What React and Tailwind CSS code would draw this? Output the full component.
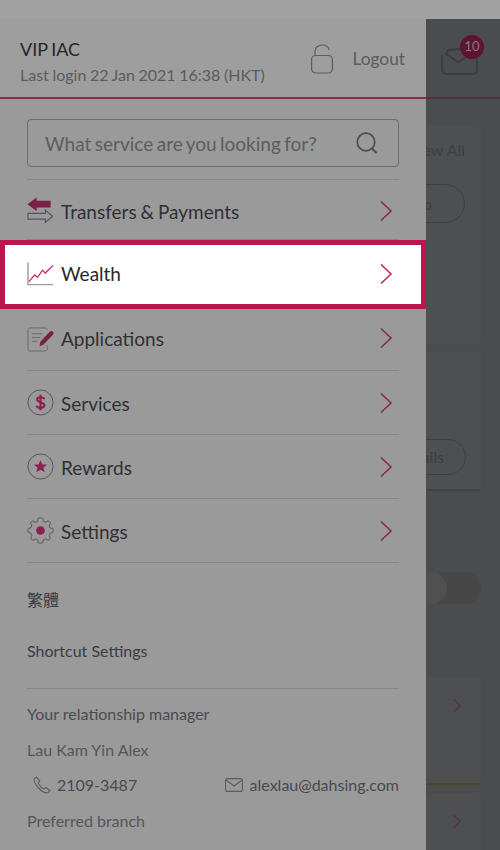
import React from "react";

const lato = { fontFamily: '"Lato", "Noto Sans CJK TC", sans-serif' };

const Chevron = ({ className }) => (
  <svg width="14" height="22" viewBox="0 0 14 22" fill="none" className={className}>
    <path d="M2 1.5L12 11L2 20.5" stroke="currentColor" strokeWidth="1.6" />
  </svg>
);

const TransferIcon = () => (
  <svg width="27" height="27" viewBox="0 0 28 28" fill="none">
    <path d="M0.5 7.5L10 0.5V4H24.5V11H10V14.5Z" fill="#7c1f45" />
    <path d="M1 17H19V13.5L26.5 20L19 26.5V23H1Z" stroke="#54565c" strokeWidth="1.2" />
  </svg>
);

const WealthIcon = () => (
  <svg width="27" height="24" viewBox="0 0 28 24" fill="none">
    <path d="M1 0V23H27" stroke="#9b9ea3" strokeWidth="1.5" />
    <path d="M2 20L8 13L11 15.5L16 8L19 11L27 3" stroke="#c9275e" strokeWidth="1.3" />
  </svg>
);

const ApplicationIcon = () => (
  <svg width="27" height="25" viewBox="0 0 28 26" fill="none">
    <path d="M21 3V2.5C21 1.5 20 1 19 1H3C2 1 1 1.5 1 2.5V23C1 24 2 25 3 25H19C20 25 21 24 21 23V19" stroke="#66686c" strokeWidth="1" />
    <path d="M5 7H16M5 11H14M5 15H11" stroke="#66686c" strokeWidth="1" />
    <path d="M13 20L14 15L23.5 5C24.5 4 26 4 27 5C28 6 27.5 7.5 26.5 8.5L17 18.5Z" fill="#7c1f45" />
  </svg>
);

const DollarIcon = () => (
  <svg width="27" height="27" viewBox="0 0 28 28" fill="none">
    <circle cx="14" cy="14" r="13" stroke="#53555a" strokeWidth="1" />
    <path d="M18 10.5C17.5 9 16 8.5 14 8.5C12 8.5 10.5 9.5 10.5 11C10.5 14.5 18 13 18 16.8C18 18.5 16.3 19.5 14 19.5C12 19.5 10.4 18.8 10 17.3M14 6V22" stroke="#8c2050" strokeWidth="2.2" />
  </svg>
);

const StarIcon = () => (
  <svg width="27" height="27" viewBox="0 0 28 28" fill="none">
    <circle cx="14" cy="14" r="13" stroke="#53555a" strokeWidth="1" />
    <path d="M14 7.5L16 12H20.8L17 15.3L18.4 20L14 17.4L9.6 20L11 15.3L7.2 12H12Z" fill="#8c2050" />
  </svg>
);

const GearIcon = () => (
  <svg width="27" height="27" viewBox="0 0 28 28" fill="none">
    <path
      d="M11.5 1.5C12.5 .7 15.5 .7 16.5 1.5L17 4.5L19.5 5.5L22 4C23.2 4.3 24 5 24.3 6.2L23 9L24 11.3L26.6 12C27.3 13 27.3 15 26.6 16L24 16.8L23 19.2L24.2 21.8C23.9 23 23 23.8 21.8 24.1L19.4 22.7L17 23.7L16.4 26.5C15.4 27.3 12.6 27.3 11.6 26.5L11 23.7L8.6 22.7L6.2 24.1C5 23.8 4.1 23 3.8 21.8L5 19.2L4 16.8L1.4 16C.7 15 .7 13 1.4 12L4 11.3L5 9L3.7 6.2C4 5 4.8 4.3 6 4L8.5 5.5L11 4.5Z"
      stroke="#53555a"
      strokeWidth="1"
    />
    <circle cx="14" cy="14" r="4.5" fill="#8c2050" />
  </svg>
);

const menu = [
  { label: "Transfers & Payments", icon: <TransferIcon />, row: "h-[60px] pt-[2px]", text: "pt-[2px]", chev: "" },
  { label: "Wealth", icon: <WealthIcon />, active: true },
  { label: "Applications", icon: <ApplicationIcon />, row: "h-[62px] pb-[1px]", text: "pb-[2px]", chev: "-mt-[3px]" },
  { label: "Services", icon: <DollarIcon />, row: "h-[64px]", text: "pt-[2px]", chev: "mt-[1px]" },
  { label: "Rewards", icon: <StarIcon />, row: "h-[64px]", text: "pt-[2px]", chev: "mt-[1px]" },
  { label: "Settings", icon: <GearIcon />, row: "h-[64px]", text: "pt-[2px]", chev: "mt-[1px]" },
];

const MenuRow = ({ item }) => {
  if (item.active) {
    return (
      <div className="flex h-[69px] items-center border-[5px] border-[#bd1550] bg-white pb-[2px] pl-[22px] pr-[28px] text-[#26272a]">
        <span className="flex w-[34px] shrink-0 items-center">{item.icon}</span>
        <span className="flex-1 text-[19px] leading-none [word-spacing:-1px]">{item.label}</span>
        <Chevron className="text-[#c9275e]" />
      </div>
    );
  }
  return (
    <div className="px-[27px]">
      <div className={`flex items-center border-b border-[#85868a] pr-[6px] text-[#303135] ${item.row}`}>
        <span className="flex w-[34px] shrink-0 items-center">{item.icon}</span>
        <span className={`flex-1 text-[19px] leading-none [word-spacing:-1px] ${item.text}`}>{item.label}</span>
        <Chevron className={`text-[#8c2a52] ${item.chev}`} />
      </div>
    </div>
  );
};

const Background = () => (
  <div className="flex-1 overflow-hidden bg-[#4b4c4e]">
    <div className="h-[80px] border-b-2 border-[#5d2a42] pl-[15px] pt-[16px]">
      <div className="relative h-[40px] w-[48px]">
        <svg width="37" height="27" viewBox="0 0 37 27" fill="none" className="absolute left-0 top-[13px]">
          <path d="M1 7V21C1 24 3 26 6 26H31C34 26 36 24 36 21V10" stroke="#3a3c41" strokeWidth="1.8" />
          <path d="M5 6L17 14L31 6L18 1L7 2Z" stroke="#3a3c41" strokeWidth="1.8" />
        </svg>
        <span className="absolute left-[19px] top-0 flex h-[24px] w-[24px] items-center justify-center rounded-full bg-[#5d1432] text-[13px] text-[#8f7480]">10</span>
      </div>
    </div>
    <div className="ml-[-80px] mr-[19px] mt-[26px] flex h-[219px] flex-col rounded-[6px] bg-[#4e4f51]">
      <div className="flex justify-end pr-[16px] pt-[15px] text-[16px] leading-[20px] text-[#3b3f47]">
        <span className="whitespace-nowrap">View All</span>
      </div>
      <div className="ml-auto mr-[16px] mt-[24px] flex h-[39px] w-[110px] items-center justify-end rounded-full border border-[#3c4048] pr-[32px] text-[16px] text-[#3b3f47]">
        <span className="whitespace-nowrap">Top up</span>
      </div>
    </div>
    <div className="ml-[-80px] mr-[19px] mt-[8px] flex h-[139px] flex-col justify-end rounded-[2px] border-b-2 border-[#424345] bg-[#4e4f51] pb-[14px]">
      <div className="ml-auto mr-[15px] flex h-[36px] w-[100px] items-center justify-end rounded-full border border-[#3c4048] pr-[21px] text-[16px] text-[#3b3f47]">
        <span>Details</span>
      </div>
    </div>
    <div className="mt-[81px] h-[32px] w-[55px] rounded-full bg-[#474747]">
      <div className="ml-[-11px] h-[32px] w-[32px] rounded-full bg-[#505050]" />
    </div>
    <div className="ml-[-30px] mr-[19px] mt-[73px] flex h-[108px] items-start justify-end rounded-[4px] border-b-2 border-[#4f4624] bg-[#4e4f51] pr-[19px] pt-[21px]">
      <Chevron className="h-[15px] w-[10px] text-[#5e2c44]" />
    </div>
    <div className="ml-[-30px] mr-[19px] mt-[8px] flex h-[106px] items-start justify-end rounded-[4px] bg-[#4e4f51] pr-[19px] pt-[21px]">
      <Chevron className="h-[15px] w-[10px] text-[#5e2c44]" />
    </div>
  </div>
);

export default function App() {
  return (
    <div className="flex h-[850px] w-[500px] flex-col overflow-hidden bg-[#9a9a9a]" style={lato}>
      <div className="h-[19px] shrink-0 bg-[#a2a2a2]" />
      <div className="flex min-h-0 flex-1">
        <aside className="z-10 flex w-[426px] shrink-0 flex-col overflow-hidden bg-[#9a9a9a]">
          <header className="flex h-[80px] shrink-0 items-start justify-between border-b-2 border-[#8e2a52] bg-[#9e9e9e] px-[20px]">
            <div className="pt-[20px]">
              <p className="text-[18px] leading-[20px] text-[#26272a] [word-spacing:-1px]">VIP IAC</p>
              <p className="mt-[6px] text-[16px] leading-[20px] text-[#5a5c60] [word-spacing:-0.5px]">Last login 22 Jan 2021 16:38 (HKT)</p>
            </div>
            <div className="flex items-center gap-[20px] pr-[1px] pt-[25px]">
              <svg width="22" height="30" viewBox="0 0 22 30" fill="none">
                <path d="M4 11V7C4 3.5 7 1 11 1C15 1 17.5 3 18 6" stroke="#5a5c60" strokeWidth="1.2" />
                <rect x="0.6" y="11.5" width="20.8" height="17.5" rx="4" stroke="#5a5c60" strokeWidth="1.2" />
              </svg>
              <span className="text-[17.3px] leading-[28px] text-[#5a5c60]">Logout</span>
            </div>
          </header>

          <div className="px-[27px] pt-[20px]">
            <div className="flex h-[48px] items-center justify-between rounded-[4px] border border-[#6c6e72] pl-[17px] pr-[20px] text-[#5b5d61]">
              <span className="text-[19px] leading-none [word-spacing:-1.4px]">What service are you looking for?</span>
              <svg width="22" height="22" viewBox="0 0 22 22" fill="none">
                <circle cx="10" cy="10" r="8.8" stroke="#484d56" strokeWidth="1.7" />
                <path d="M16 16.5L20.5 21" stroke="#484d56" strokeWidth="2" />
              </svg>
            </div>
            <div className="mt-[12px] border-b border-[#85868a]" />
          </div>

          {menu.map((item) => (
            <MenuRow key={item.label} item={item} />
          ))}

          <div className="px-[27px]">
            <p className="mt-[27px] text-[16px] leading-[20px] text-[#3c3d41]">繁體</p>
            <p className="mt-[31px] text-[16px] leading-[20px] text-[#3c3d41]">Shortcut Settings</p>
            <div className="mt-[27px] border-b border-[#85868a]" />
            <p className="mt-[15px] text-[16px] leading-[20px] text-[#4a4b4f]">Your relationship manager</p>
            <p className="mt-[16px] text-[16px] leading-[20px] text-[#54565c]">Lau Kam Yin Alex</p>
            <div className="mt-[15px] flex items-center justify-between text-[16px] leading-[20px] text-[#48494d]">
              <div className="flex items-center gap-[6px] pl-[6px]">
                <svg width="18" height="18" viewBox="0 0 18 18" fill="none">
                  <path d="M3.5 1L1.5 2.5C0.5 4 2 8 5.5 12C9 15.5 13 17.5 15 16.5L17 14.5L12.8 11.5L11 13C9 12.5 5.5 8.5 5.2 6.5L6.8 5Z" stroke="#5a5c60" strokeWidth="1.1" />
                </svg>
                <span>2109-3487</span>
              </div>
              <div className="flex items-center gap-[7px]">
                <svg width="18" height="14" viewBox="0 0 18 14" fill="none">
                  <rect x="0.6" y="0.6" width="16.8" height="12.8" rx="2" stroke="#5a5c60" strokeWidth="1.1" />
                  <path d="M1 2L9 8L17 2" stroke="#5a5c60" strokeWidth="1.1" />
                </svg>
                <span>alexlau@dahsing.com</span>
              </div>
            </div>
            <p className="mt-[16px] text-[16px] leading-[20px] text-[#54565c]">Preferred branch</p>
          </div>
        </aside>
        <Background />
      </div>
    </div>
  );
}
